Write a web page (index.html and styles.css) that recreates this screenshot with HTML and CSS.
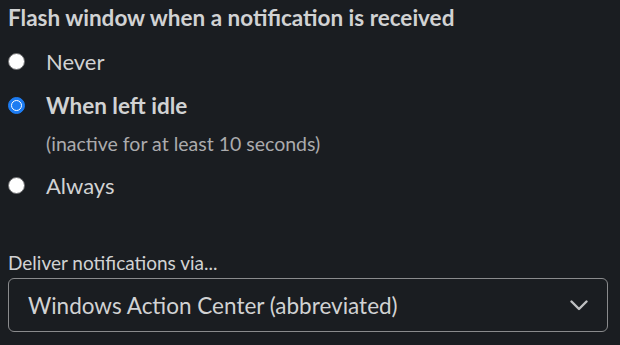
FILE: index.html
```html
<!DOCTYPE html>
<html>
<head>
<meta charset="utf-8">
<link rel="stylesheet" href="styles.css">
</head>
<body>
<div class="panel">
  <h2 class="title">Flash window when a notification is received</h2>
  <div class="options">
    <label class="option">
      <span class="radio"></span>
      <span class="label">Never</span>
    </label>
    <label class="option checked">
      <span class="radio"><span class="dot"></span></span>
      <span class="label">When left idle</span>
    </label>
    <div class="hint">(inactive for at least 10 seconds)</div>
    <label class="option">
      <span class="radio"></span>
      <span class="label">Always</span>
    </label>
  </div>
  <div class="field">
    <div class="field-label">Deliver notifications via...</div>
    <div class="select">
      <span class="select-text">Windows Action Center (abbreviated)</span>
      <svg class="chevron" width="18" height="11" viewBox="0 0 18 11"><path d="M1.5 1.5 L9 9 L16.5 1.5" fill="none" stroke="#bfc0c2" stroke-width="2.4" stroke-linecap="round" stroke-linejoin="round"/></svg>
    </div>
  </div>
</div>
</body>
</html>
```

FILE: styles.css
```css
html, body {
  margin: 0;
  padding: 0;
  background: #1a1d21;
}
body {
  font-family: Lato, "Noto Sans", sans-serif;
  color: #d1d2d3;
}
.panel {
  padding: 1px 12px 0 8px;
}
.title {
  margin: 0;
  font-size: 22.5px;
  font-weight: 700;
  line-height: 34px;
}
.options {
  display: flex;
  flex-direction: column;
  margin-top: 4px;
}
.option {
  display: flex;
  align-items: center;
  height: 44px;
}
.radio {
  box-sizing: border-box;
  width: 17px;
  height: 17px;
  border-radius: 50%;
  background: #fff;
  border: 1px solid #6b6c6e;
  display: flex;
  align-items: center;
  justify-content: center;
}
.checked .radio {
  background: #1d7cf2;
  border: 1px solid #1d7cf2;
}
.dot {
  box-sizing: border-box;
  width: 11px;
  height: 11px;
  border-radius: 50%;
  border: 1.6px solid #fff;
  background: #1d7cf2;
}
.label {
  margin-left: 21px;
  font-size: 22px;
}
.checked .label {
  font-weight: 700;
  font-size: 22.5px;
}
.hint {
  margin-left: 38px;
  margin-top: 3px;
  margin-bottom: 5px;
  font-size: 19.5px;
  line-height: 28px;
  color: #ababad;
}
.field {
  margin-top: 41px;
}
.field-label {
  font-size: 19px;
  line-height: 30px;
}
.select {
  box-sizing: border-box;
  height: 54px;
  border: 1px solid #8a8b8d;
  border-radius: 6px;
  display: flex;
  align-items: center;
  justify-content: space-between;
  padding: 0 19px 0 19px;
}
.select-text {
  font-size: 22.5px;
}
```
